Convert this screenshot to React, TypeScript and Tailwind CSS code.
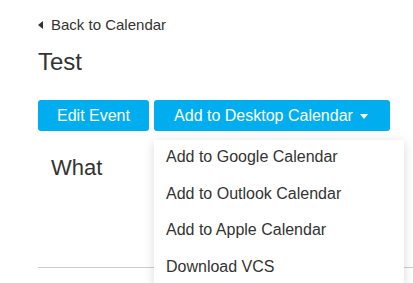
import React from 'react';

const menuItems = [
  'Add to Google Calendar',
  'Add to Outlook Calendar',
  'Add to Apple Calendar',
  'Download VCS',
];

export default function App() {
  return (
    <div className="relative min-h-screen overflow-hidden bg-white pl-[38px] pt-[15px] font-['Arial','Liberation_Sans',sans-serif] text-[#333]">
      {/* Back link */}
      <a href="#" className="flex items-center gap-[8px] text-[15px] leading-[20px] text-[#333]">
        <svg width="5" height="8" viewBox="0 0 5 8" className="shrink-0">
          <path d="M5 0 L0 4 L5 8 Z" fill="#333" />
        </svg>
        <span>Back to Calendar</span>
      </a>

      {/* Title */}
      <h1 className="mt-[12px] text-[24px] leading-[30px] font-normal">Test</h1>

      {/* Actions */}
      <div className="relative mt-[23px] flex gap-[5px]">
        <button className="flex h-[31px] w-[111px] items-center justify-center rounded-[3px] bg-[#00aeef] text-[16px] leading-6 text-white">
          Edit Event
        </button>
        <button className="flex h-[31px] w-[236px] items-center justify-center gap-[7px] rounded-[3px] bg-[#00aeef] pr-[2px] text-[16px] leading-6 text-white">
          <span>Add to Desktop Calendar</span>
          <span className="mt-[1px] h-0 w-0 border-l-[4px] border-r-[4px] border-t-[5px] border-l-transparent border-r-transparent border-t-white" />
        </button>

        {/* Dropdown */}
        <ul className="absolute left-[116px] top-[40px] z-10 w-[250px] bg-white shadow-[0_2px_10px_rgba(0,0,0,0.15)]">
          {menuItems.map((item) => (
            <li key={item} className="h-[36.5px] px-[12px] pt-[5px] text-[16px] leading-6 text-[#333]">
              {item}
            </li>
          ))}
        </ul>
      </div>

      {/* What section */}
      <div className="mt-[23px] h-[114px] border-b border-[#ccc] pl-[13px]">
        <h2 className="text-[22px] leading-[28px] font-normal">What</h2>
      </div>
    </div>
  );
}
